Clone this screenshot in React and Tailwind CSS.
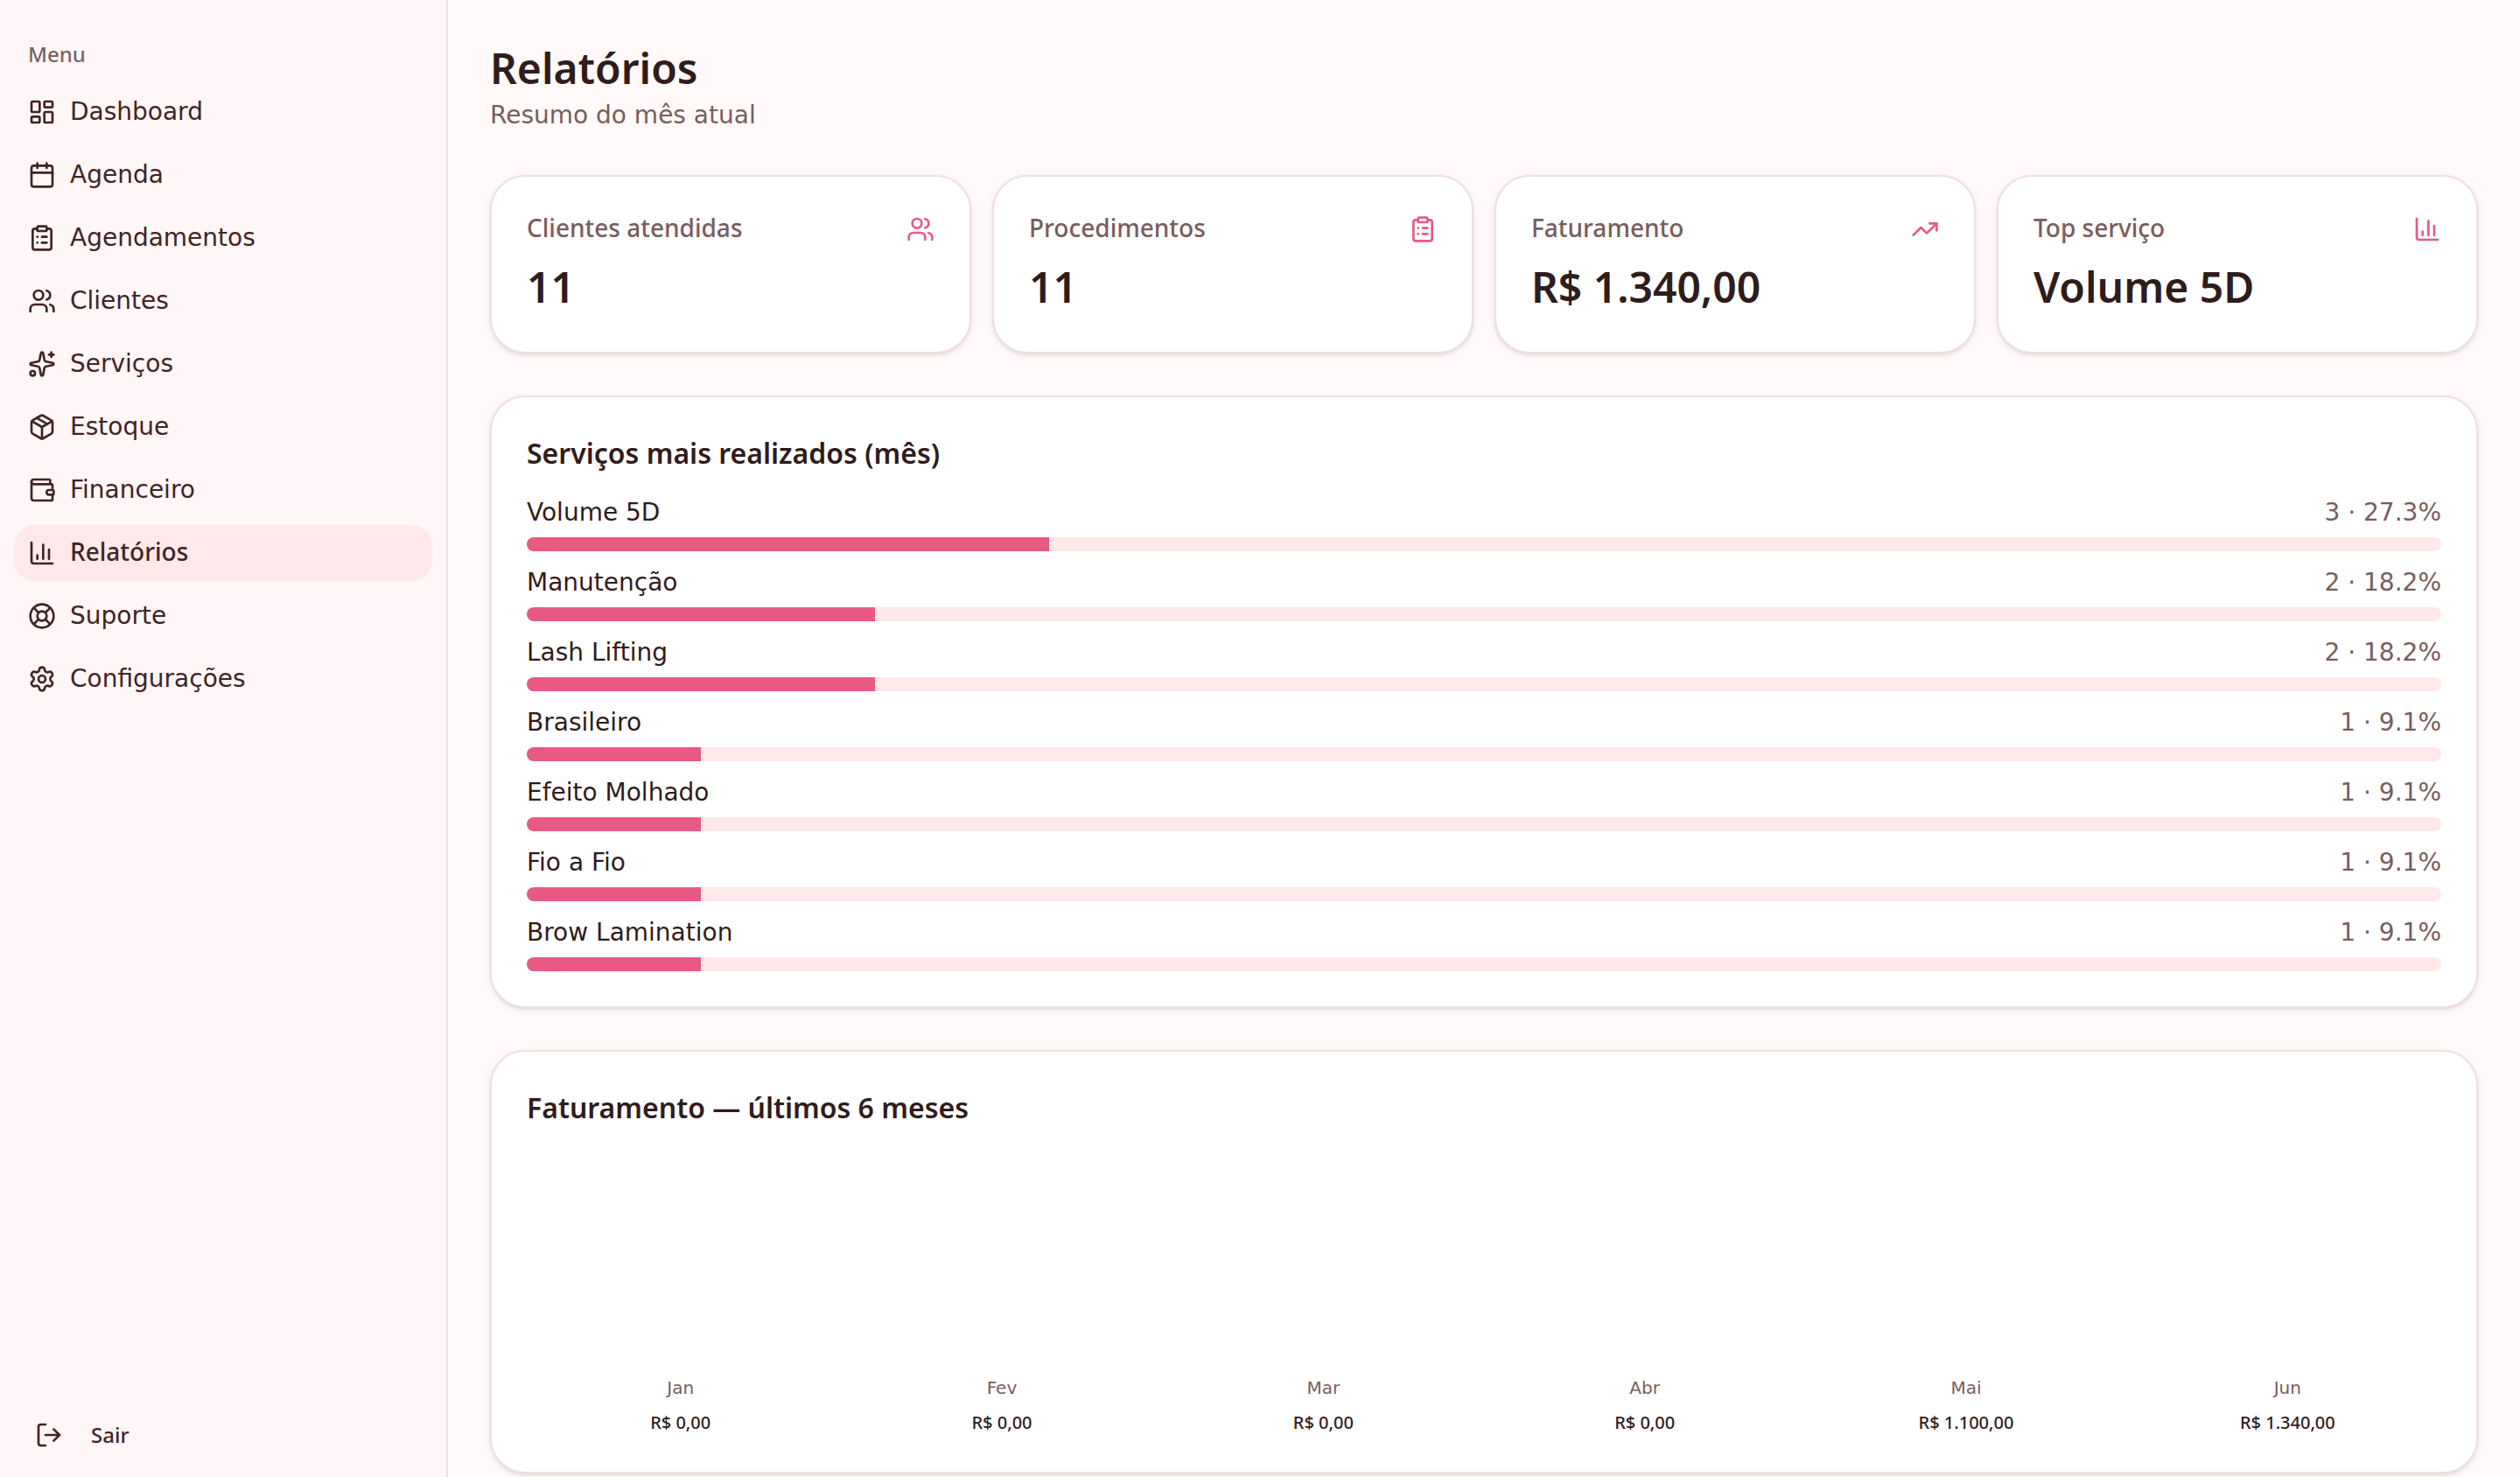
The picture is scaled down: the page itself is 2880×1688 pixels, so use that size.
import {
  LayoutDashboard,
  Calendar,
  ClipboardList,
  Users,
  Sparkles,
  Package,
  ChartColumn,
  LifeBuoy,
  Settings,
  LogOut,
  TrendingUp,
} from "lucide-react";

function WalletIcon({ className }) {
  return (
    <svg
      className={className}
      viewBox="0 0 24 24"
      fill="none"
      stroke="currentColor"
      strokeWidth="2"
      strokeLinecap="round"
      strokeLinejoin="round"
      aria-hidden="true"
    >
      <path d="M19 7V4a1 1 0 0 0-1-1H5a2 2 0 0 0 0 4h15a1 1 0 0 1 1 1v4h-3a2 2 0 0 0 0 4h3a1 1 0 0 0 1-1v-2a1 1 0 0 0-1-1" />
      <path d="M3 5v14a2 2 0 0 0 2 2h15a1 1 0 0 0 1-1v-4" />
    </svg>
  );
}

const navItems = [
  { label: "Dashboard", icon: LayoutDashboard },
  { label: "Agenda", icon: Calendar },
  { label: "Agendamentos", icon: ClipboardList },
  { label: "Clientes", icon: Users },
  { label: "Serviços", icon: Sparkles },
  { label: "Estoque", icon: Package },
  { label: "Financeiro", icon: WalletIcon },
  { label: "Relatórios", icon: ChartColumn, active: true },
  { label: "Suporte", icon: LifeBuoy },
  { label: "Configurações", icon: Settings },
];

const stats = [
  { label: "Clientes atendidas", value: "11", icon: Users },
  { label: "Procedimentos", value: "11", icon: ClipboardList },
  { label: "Faturamento", value: "R$ 1.340,00", icon: TrendingUp },
  { label: "Top serviço", value: "Volume 5D", icon: ChartColumn },
];

const services = [
  { name: "Volume 5D", count: 3 },
  { name: "Manutenção", count: 2 },
  { name: "Lash Lifting", count: 2 },
  { name: "Brasileiro", count: 1 },
  { name: "Efeito Molhado", count: 1 },
  { name: "Fio a Fio", count: 1 },
  { name: "Brow Lamination", count: 1 },
];

const totalServices = services.reduce((sum, { count }) => sum + count, 0);

const months = [
  { name: "Jan", total: "R$ 0,00" },
  { name: "Fev", total: "R$ 0,00" },
  { name: "Mar", total: "R$ 0,00" },
  { name: "Abr", total: "R$ 0,00" },
  { name: "Mai", total: "R$ 1.100,00" },
  { name: "Jun", total: "R$ 1.340,00" },
];

function Card({ children }) {
  return (
    <section className="rounded-[40px] border-2 border-[#eee0e0] bg-white p-10 shadow-[0_2px_6px_rgba(0,0,0,0.1),0_2px_4px_-2px_rgba(0,0,0,0.1)]">
      {children}
    </section>
  );
}

function CardTitle({ children }) {
  return (
    <h2 className="mb-6 font-['Noto_Sans',sans-serif] text-[32px] leading-[48px] font-semibold">
      {children}
    </h2>
  );
}

function Sidebar() {
  return (
    <aside className="flex w-[512px] shrink-0 flex-col justify-between border-r-2 border-[#eee0e0] bg-[#fff6f7] text-[#402426]">
      <nav aria-label="Menu" className="px-4 pt-8">
        <div className="flex h-16 items-center px-4 pb-1 font-['Noto_Sans',sans-serif] text-2xl font-medium opacity-70">
          Menu
        </div>
        <ul className="flex flex-col gap-2">
          {navItems.map(({ label, icon: Icon, active }) => (
            <li key={label}>
              <a
                href="#"
                aria-current={active ? "page" : undefined}
                className="flex h-16 items-center gap-4 rounded-3xl px-4 text-[28px] leading-10 aria-[current=page]:bg-[#ffe8e9]"
              >
                <Icon className="size-8 shrink-0" />
                {active ? (
                  <span className="pb-1 font-['Noto_Sans',sans-serif] leading-9 font-medium">
                    {label}
                  </span>
                ) : (
                  <span>{label}</span>
                )}
              </a>
            </li>
          ))}
        </ul>
      </nav>
      <div className="p-4">
        <button
          type="button"
          className="flex h-16 w-full items-center gap-8 rounded-3xl px-6 font-['Noto_Sans',sans-serif] text-2xl font-medium"
        >
          <LogOut className="size-8 shrink-0" />
          Sair
        </button>
      </div>
    </aside>
  );
}

export default function App() {
  return (
    <div className="flex h-screen bg-[#fffaf9] font-['DejaVu_Sans',sans-serif] text-[#2f1c1c]">
      <Sidebar />
      <main className="flex min-w-0 flex-1 flex-col gap-12 overflow-y-auto p-12 [scrollbar-width:none]">
        <header className="flex flex-col gap-1">
          <h1 className="font-['Noto_Sans',sans-serif] text-5xl leading-[60px] font-semibold">
            Relatórios
          </h1>
          <p className="text-[28px] leading-10 text-[#775d5d]">Resumo do mês atual</p>
        </header>

        <div className="grid grid-cols-4 gap-6">
          {stats.map(({ label, value, icon: Icon }) => (
            <Card key={label}>
              <div className="flex items-center justify-between">
                <h3 className="pb-1 font-['Noto_Sans',sans-serif] text-[28px] leading-9 font-medium text-[#775d5d]">
                  {label}
                </h3>
                <Icon className="size-8 text-[#e85a84]" />
              </div>
              <p className="mt-4 pb-1 font-['Noto_Sans',sans-serif] text-5xl leading-[60px] font-semibold">
                {value}
              </p>
            </Card>
          ))}
        </div>

        <Card>
          <CardTitle>Serviços mais realizados (mês)</CardTitle>
          <ul className="flex flex-col gap-4">
            {services.map(({ name, count }) => {
              const share = (count / totalServices) * 100;
              return (
                <li key={name} className="flex flex-col gap-2">
                  <div className="flex items-center justify-between text-[28px] leading-10">
                    <span>{name}</span>
                    <span className="text-[#775d5d]">{`${count} · ${share.toFixed(1)}%`}</span>
                  </div>
                  <div className="h-4 overflow-hidden rounded-full bg-[#ffe8e9]">
                    <div className="h-full bg-[#e85a84]" style={{ width: `${share}%` }} />
                  </div>
                </li>
              );
            })}
          </ul>
        </Card>

        <Card>
          <CardTitle>Faturamento — últimos 6 meses</CardTitle>
          <div className="grid h-82 grid-cols-6 items-end gap-4">
            {months.map(({ name, total }) => (
              <div key={name} className="flex flex-col items-center gap-2 text-xl leading-8">
                <span className="text-[#775d5d]">{name}</span>
                <span className="font-['Noto_Sans',sans-serif] font-medium">{total}</span>
              </div>
            ))}
          </div>
        </Card>
      </main>
    </div>
  );
}
